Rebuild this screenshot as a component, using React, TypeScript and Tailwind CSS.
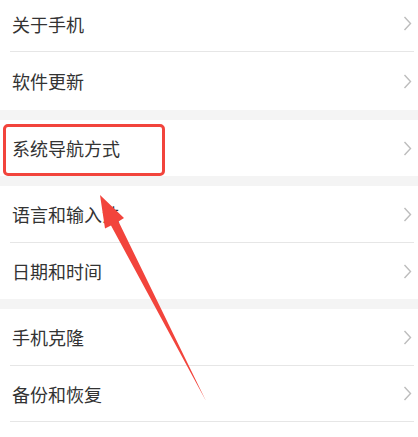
import React from "react";

type Row = { label: string; h: string };

const Chevron = () => (
  <svg width="9" height="15" viewBox="0 0 9 15" fill="none" className="shrink-0">
    <path d="M1.5 1 L7.5 7.5 L1.5 14" stroke="#bdbdbd" strokeWidth="1.4" />
  </svg>
);

function Item({ label, h }: Row) {
  return (
    <div className={`flex items-center justify-between pl-3 pr-[6px] bg-white ${h}`}>
      <span className="text-[18px] text-[#333333] leading-none">{label}</span>
      <Chevron />
    </div>
  );
}

const Divider = () => (
  <div className="bg-white px-[10px]">
    <div className="h-px bg-[#e6e6e6] mr-[-6px]" />
  </div>
);

const Band = () => <div className="h-[10px] bg-[#f4f4f4]" />;

export default function App() {
  return (
    <div
      className="relative w-[418px] h-[437px] bg-white overflow-hidden"
      style={{ fontFamily: '"Noto Sans CJK SC", "Noto Sans", sans-serif' }}
    >
      <div className="flex flex-col">
        <Item label="关于手机" h="h-[51px] pb-[4px]" />
        <Divider />
        <Item label="软件更新" h="h-[58px]" />
        <Band />
        <Item label="系统导航方式" h="h-[56px]" />
        <Band />
        <Item label="语言和输入法" h="h-[56px]" />
        <Divider />
        <Item label="日期和时间" h="h-[56px]" />
        <Band />
        <Item label="手机克隆" h="h-[56px]" />
        <Divider />
        <Item label="备份和恢复" h="h-[55px]" />
        <Divider />
      </div>

      {/* highlight box */}
      <div className="absolute left-[3px] top-[124px] w-[162px] h-[52px] border-[3px] border-[#f2443c] rounded-[5px]" />

      {/* arrow */}
      <svg className="absolute left-0 top-0" width="418" height="437" viewBox="0 0 418 437">
        <polygon
          points="100,195 124,218 118.5,221.5 206,401 111,225.5 105,228.5"
          fill="#f2443c"
        />
      </svg>
    </div>
  );
}
